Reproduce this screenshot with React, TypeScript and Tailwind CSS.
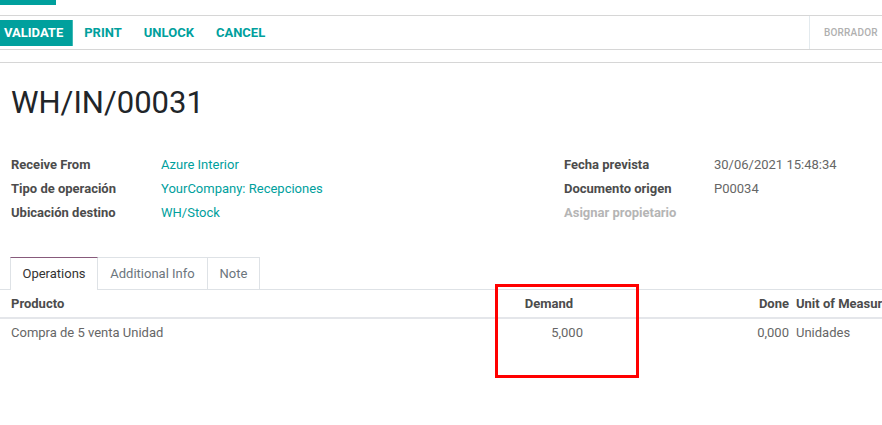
const font = { fontFamily: "Roboto, 'Noto Sans', sans-serif" };

function Field({ label, value, link, muted }: { label: string; value?: string; link?: boolean; muted?: boolean }) {
  return (
    <div className="flex h-[24px] items-center">
      <div className={`w-[150px] text-[13px] font-bold ${muted ? "text-[#b5b5b5]" : "text-[#4c4c4c]"}`}>{label}</div>
      {value && (
        <div className={`text-[13px] ${link ? "text-[#00A09D]" : "text-[#666666]"}`}>{value}</div>
      )}
    </div>
  );
}

export default function App() {
  return (
    <div className="relative h-[425px] w-[882px] overflow-hidden bg-white" style={font}>
      <div className="h-[15px]">
        <div className="h-[5px] w-[56px] bg-[#00A09D]" />
      </div>

      {/* control panel */}
      <div className="flex h-[35px] items-stretch border-y border-[#d6d6d6]">
        <div className="flex flex-1 items-center">
          <button className="flex h-[26px] items-center border-r border-[#3fbab7] bg-[#00A09D] pl-[4px] pr-[9px] text-[13px] font-bold text-white">
            VALIDATE
          </button>
          <button className="px-[11px] text-[13px] font-bold text-[#00A09D]">PRINT</button>
          <button className="px-[11px] text-[13px] font-bold text-[#00A09D]">UNLOCK</button>
          <button className="px-[11px] text-[13px] font-bold text-[#00A09D]">CANCEL</button>
        </div>
        <div className="flex w-[73px] items-center border-l border-[#e3eaee] pl-[14px] text-[10px] font-medium tracking-[0.2px] text-[#b0b0b0]">
          BORRADOR
        </div>
      </div>

      <div className="mt-[12px] border-t border-[#d6d6d6] px-[11px]">
        <h1 className="mt-[22px] text-[31px] leading-[36px] text-[#212529]">WH/IN/00031</h1>

        <div className="mt-[32px] flex">
          <div className="w-[553px]">
            <Field label="Receive From" value="Azure Interior" link />
            <Field label="Tipo de operación" value="YourCompany: Recepciones" link />
            <Field label="Ubicación destino" value="WH/Stock" link />
          </div>
          <div>
            <Field label="Fecha prevista" value="30/06/2021 15:48:34" />
            <Field label="Documento origen" value="P00034" />
            <Field label="Asignar propietario" muted />
          </div>
        </div>
      </div>

      {/* tabs */}
      <div className="mt-[32px] flex h-[33px] items-end border-b border-[#dee2e6] pl-[10px]">
        <div className="-mb-px flex h-[33px] w-[88px] items-center justify-center border-x border-t border-[#dee2e6] border-t-[#875a7b] bg-white text-[13px] text-[#333]">
          Operations
        </div>
        <div className="flex h-[32px] w-[110px] items-center justify-center border-r border-t border-[#dee2e6] text-[13px] text-[#6c757d]">
          Additional Info
        </div>
        <div className="flex h-[32px] w-[52px] items-center justify-center border-r border-t border-[#dee2e6] text-[13px] text-[#6c757d]">
          Note
        </div>
      </div>

      {/* table */}
      <div className="flex h-[29px] items-center border-b-2 border-[#e4e6ea] text-[13px] font-bold text-[#4c4c4c]">
        <div className="w-[573px] shrink-0 pl-[11px]">
          <div className="flex justify-between">
            <span>Producto</span>
            <span>Demand</span>
          </div>
        </div>
        <div className="w-[216px] shrink-0 text-right">Done</div>
        <div className="shrink-0 whitespace-nowrap pl-[7px]">Unit of Measure</div>
      </div>
      <div className="flex h-[27px] items-center text-[13px] text-[#666666]">
        <div className="w-[583px] shrink-0 pl-[11px]">
          <div className="flex justify-between">
            <span>Compra de 5 venta Unidad</span>
            <span>5,000</span>
          </div>
        </div>
        <div className="w-[206px] shrink-0 text-right">0,000</div>
        <div className="shrink-0 whitespace-nowrap pl-[7px]">Unidades</div>
      </div>

      {/* highlight box */}
      <div className="absolute left-[495px] top-[284px] h-[94px] w-[144px] border-[3px] border-[#ff0000]" />
    </div>
  );
}
